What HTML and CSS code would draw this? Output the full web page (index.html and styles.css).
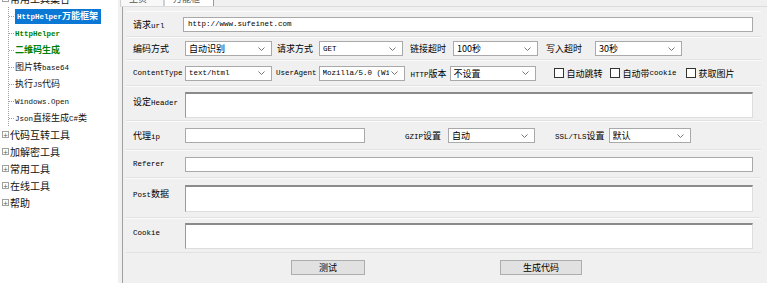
FILE: index.html
```html
<!DOCTYPE html>
<html lang="zh-CN">
<head>
    <meta charset="UTF-8">
    <title>HttpHelper万能框架</title>
    <link rel="stylesheet" href="styles.css">
</head>
<body>
<div class="app">
    <!-- 左侧功能树 -->
    <aside class="tree">
        <div class="node top"><span class="pm">−</span>常用工具集合</div>
        <ul class="children">
            <li class="cur"><span class="hl"><span class="en">HttpHelper</span>万能框架</span></li>
            <li class="green"><span class="en">HttpHelper</span></li>
            <li class="green">二维码生成</li>
            <li>图片转<span class="en">base64</span></li>
            <li>执行<span class="en">JS</span>代码</li>
            <li><span class="en">Windows.Open</span></li>
            <li><span class="en">Json</span>直接生成<span class="en">C#</span>类</li>
        </ul>
        <div class="node"><span class="pm">+</span>代码互转工具</div>
        <div class="node"><span class="pm">+</span>加解密工具</div>
        <div class="node"><span class="pm">+</span>常用工具</div>
        <div class="node"><span class="pm">+</span>在线工具</div>
        <div class="node"><span class="pm">+</span>帮助</div>
    </aside>

    <!-- 右侧主体 -->
    <main class="main">
        <div class="tabs">
            <span class="tab t1">主页</span>
            <span class="tab t2">万能框架</span>
        </div>
        <div class="page">
            <div class="row r-url">
                <label class="lbl">请求<span class="en">url</span></label>
                <input class="txt en-in w-full" value="http://www.sufeinet.com">
            </div>

            <div class="row r-sel">
                <label class="lbl">编码方式</label>
                <div class="sel w87"><span>自动识别</span><svg width="7" height="4" viewBox="0 0 7 4"><path d="M0.5 0.5 L3.5 3.5 L6.5 0.5" fill="none" stroke="#777"/></svg></div>
                <label class="lbl2 ml5">请求方式</label>
                <div class="sel w84 ml6"><span class="en">GET</span><svg width="7" height="4" viewBox="0 0 7 4"><path d="M0.5 0.5 L3.5 3.5 L6.5 0.5" fill="none" stroke="#777"/></svg></div>
                <label class="lbl2 ml7">链接超时</label>
                <div class="sel w85 ml7"><span>100秒</span><svg width="7" height="4" viewBox="0 0 7 4"><path d="M0.5 0.5 L3.5 3.5 L6.5 0.5" fill="none" stroke="#777"/></svg></div>
                <label class="lbl2 ml8">写入超时</label>
                <div class="sel w87 ml13"><span>30秒</span><svg width="7" height="4" viewBox="0 0 7 4"><path d="M0.5 0.5 L3.5 3.5 L6.5 0.5" fill="none" stroke="#777"/></svg></div>
            </div>

            <div class="row r-sel2">
                <label class="lbl en">ContentType</label>
                <div class="sel w87"><span class="en">text/html</span><svg width="7" height="4" viewBox="0 0 7 4"><path d="M0.5 0.5 L3.5 3.5 L6.5 0.5" fill="none" stroke="#777"/></svg></div>
                <label class="lbl2 en ml4">UserAgent</label>
                <div class="sel w86 ml2"><span class="en">Mozilla/5.0 (Win</span><svg width="7" height="4" viewBox="0 0 7 4"><path d="M0.5 0.5 L3.5 3.5 L6.5 0.5" fill="none" stroke="#777"/></svg></div>
                <label class="lbl2 ml6"><span class="en">HTTP</span>版本</label>
                <div class="sel w86 ml3"><span>不设置</span><svg width="7" height="4" viewBox="0 0 7 4"><path d="M0.5 0.5 L3.5 3.5 L6.5 0.5" fill="none" stroke="#777"/></svg></div>
                <label class="chk ml18"><span class="cb"></span>自动跳转</label>
                <label class="chk ml7"><span class="cb"></span>自动带<span class="en">cookie</span></label>
                <label class="chk ml9"><span class="cb"></span>获取图片</label>
            </div>

            <div class="row r-area">
                <label class="lbl">设定<span class="en">Header</span></label>
                <textarea class="area w-full"></textarea>
            </div>

            <div class="row r-proxy">
                <label class="lbl">代理<span class="en">ip</span></label>
                <input class="txt w180">
                <label class="lbl2 ml40"><span class="en">GZIP</span>设置</label>
                <div class="sel w87 ml7"><span>自动</span><svg width="7" height="4" viewBox="0 0 7 4"><path d="M0.5 0.5 L3.5 3.5 L6.5 0.5" fill="none" stroke="#777"/></svg></div>
                <label class="lbl2 ml20"><span class="en">SSL/TLS</span>设置</label>
                <div class="sel w82 ml4"><span>默认</span><svg width="7" height="4" viewBox="0 0 7 4"><path d="M0.5 0.5 L3.5 3.5 L6.5 0.5" fill="none" stroke="#777"/></svg></div>
            </div>

            <div class="row r-ref">
                <label class="lbl en">Referer</label>
                <input class="txt w-full">
            </div>

            <div class="row r-post">
                <label class="lbl"><span class="en">Post</span>数据</label>
                <textarea class="area w-full tall"></textarea>
            </div>

            <div class="row r-cookie">
                <label class="lbl en">Cookie</label>
                <textarea class="area w-full"></textarea>
            </div>

            <div class="btns">
                <button class="btn b-test">测试</button>
                <button class="btn b-gen">生成代码</button>
            </div>
        </div>
    </main>
</div>
</body>
</html>
```

FILE: styles.css
```css
/* 整体 */
body {
    margin: 0;
    padding: 0;
    font-family: "Noto Sans CJK SC", "Microsoft YaHei", sans-serif;
    font-size: 9px;
    color: #000;
    background-color: #f0f0f0;
}

.app {
    display: flex;
    width: 767px;
    height: 283px;
    overflow: hidden;
}

/* 英文部分模拟宋体等宽 */
.en {
    font-family: "Liberation Mono", monospace;
    font-size: 7.5px;
}

/* 左侧树 */
.tree {
    width: 118px;
    flex: none;
    background-color: #fff;
    margin-right: 2px;
    overflow: hidden;
}

.node {
    height: 17px;
    font-size: 10px;
    display: flex;
    align-items: center;
    color: #111;
}

.node.top {
    margin-top: -10px;
}

.pm {
    display: inline-block;
    width: 5px;
    height: 5px;
    line-height: 5px;
    border: 1px solid #a0a0a0;
    font-size: 6px;
    text-align: center;
    color: #555;
    margin: 0 1px 0 2px;
    font-family: "DejaVu Sans", sans-serif;
    background: #fff;
}

.children {
    list-style: none;
    margin: 0 0 0 8px;
    padding: 0;
    border-left: 1px dotted #a0a0a0;
}

.children li {
    height: 17px;
    line-height: 17px;
    font-size: 9px;
    color: #111;
    white-space: nowrap;
}

.children li::before {
    content: "";
    display: inline-block;
    width: 5px;
    height: 0;
    border-top: 1px dotted #a0a0a0;
    vertical-align: middle;
    margin-right: 1px;
}

/* 选中节点 */
.hl {
    display: inline-block;
    background: #0a78d4;
    color: #fff;
    font-weight: bold;
    padding: 0 3px 0 2px;
    line-height: 13px;
}

.children li.green {
    color: #008000;
    font-weight: bold;
}

/* 右侧 */
.main {
    flex: 1;
    display: flex;
    flex-direction: column;
    background-color: #f0f0f0;
}

.tabs {
    height: 6px;
    display: flex;
    overflow: hidden;
    border-bottom: 1px solid #dcdcdc;
}

.tab {
    height: 14px;
    margin-top: -9px;
    padding: 0 8px;
    font-size: 9px;
    line-height: 14px;
    border: 1px solid #d0d0d0;
    color: #555;
}

.tab.t1 {
    width: 26px;
    background: #f8f8f8;
}

.tab.t2 {
    width: 32px;
    background: #fff;
    border-right: 1px solid #999;
}

.page {
    flex: 1;
    margin-left: 2px;
    border-left: 1px solid #a0a0a0;
    padding: 4px 6px 0 3px;
}

.row {
    display: flex;
    align-items: center;
    padding-left: 7px;
    border-bottom: 1px solid #e2e2e2;
    border-top: 1px solid #fbfbfb;
}

.r-url { height: 24px; }
.r-sel { height: 21px; }
.r-sel2 { height: 24px; }
.r-area { height: 33px; align-items: flex-start; }
.r-proxy { height: 27px; }
.r-ref { height: 26px; }
.r-post { height: 38px; align-items: flex-start; }
.r-cookie { height: 33px; align-items: flex-start; }

.r-area .lbl { margin-top: 8px; }
.r-area .area { margin-top: 5px; }
.r-post .lbl { margin-top: 8px; }
.r-post .area { margin-top: 6px; }
.r-cookie .lbl { margin-top: 10px; }
.r-cookie .area { margin-top: 4px; }

.lbl {
    width: 52px;
    flex: none;
    white-space: nowrap;
}

.lbl2 {
    flex: none;
    white-space: nowrap;
}

/* 输入框 */
.txt {
    box-sizing: border-box;
    height: 15px;
    border: 1px solid #a9a9a9;
    background: #fff;
    padding: 0 4px;
    margin: 0;
    outline: none;
}

.en-in {
    font-family: "Liberation Mono", monospace;
    font-size: 7.5px;
}

.w-full { width: 568px; }
.r-url .w-full { width: 570px; margin-left: -2px; }
.w180 { width: 180px; }

.area {
    box-sizing: border-box;
    height: 26px;
    border: 1px solid #ddd;
    border-top: 2px solid #8a8a8a;
    border-left: 1px solid #9a9a9a;
    background: #fff;
    resize: none;
    margin: 0;
    padding: 0;
    outline: none;
}

.area.tall { height: 27px; }

/* 下拉框 */
.sel {
    box-sizing: border-box;
    height: 15px;
    flex: none;
    display: flex;
    align-items: center;
    justify-content: space-between;
    border: 1px solid #a9a9a9;
    background: #fff;
    padding: 0 6px 0 3px;
    white-space: nowrap;
    overflow: hidden;
}

.sel span {
    overflow: hidden;
}

.sel svg {
    flex: none;
    margin-left: 2px;
}

.w82 { width: 82px; }
.w84 { width: 84px; }
.w85 { width: 85px; }
.w86 { width: 86px; }
.w87 { width: 87px; }

.ml2 { margin-left: 2px; }
.ml3 { margin-left: 3px; }
.ml4 { margin-left: 4px; }
.ml5 { margin-left: 5px; }
.ml6 { margin-left: 6px; }
.ml7 { margin-left: 7px; }
.ml8 { margin-left: 8px; }
.ml9 { margin-left: 9px; }
.ml13 { margin-left: 13px; }
.ml18 { margin-left: 18px; }
.ml20 { margin-left: 20px; }
.ml40 { margin-left: 40px; }

/* 复选框 */
.chk {
    display: flex;
    align-items: center;
    white-space: nowrap;
}

.cb {
    width: 8px;
    height: 8px;
    border: 1px solid #333;
    background: #fff;
    margin-right: 3px;
}

/* 按钮 */
.btns {
    height: 29px;
    display: flex;
    align-items: center;
}

.btn {
    height: 15px;
    box-sizing: border-box;
    background: #e1e1e1;
    border: 1px solid #adadad;
    font-family: "Noto Sans CJK SC", sans-serif;
    font-size: 9px;
    padding: 0;
    line-height: 13px;
}

.b-test {
    width: 74px;
    margin-left: 165px;
}

.b-gen {
    width: 82px;
    margin-left: 135px;
}
```
